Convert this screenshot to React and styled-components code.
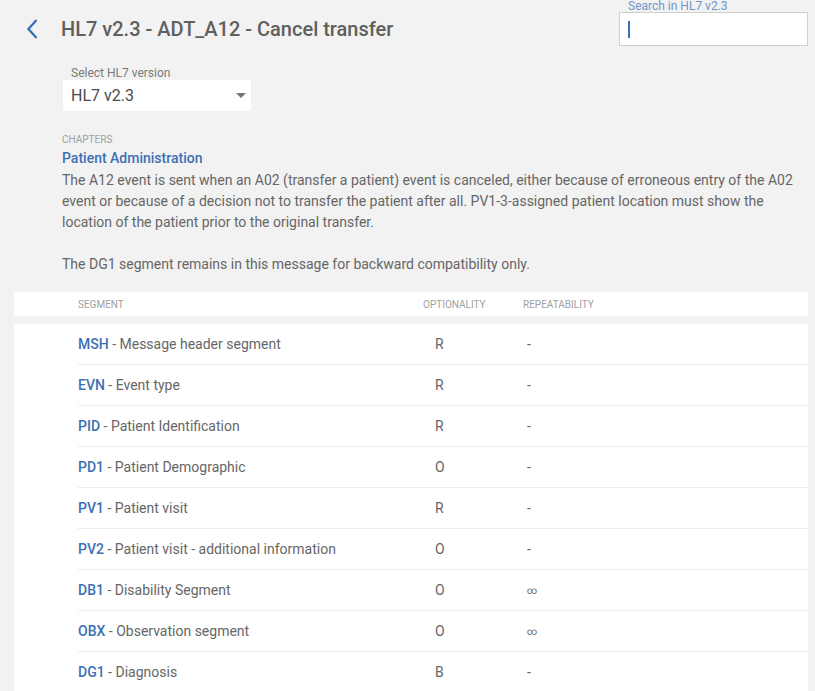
import React from "react";
import styled, { createGlobalStyle } from "styled-components";

const GlobalStyle = createGlobalStyle`
  body {
    margin: 0;
    background: #f2f2f2;
    font-family: Roboto, "Liberation Sans", sans-serif;
    color: #666;
  }
`;

const segments = [
  { code: "MSH", name: "Message header segment", opt: "R", rep: "-" },
  { code: "EVN", name: "Event type", opt: "R", rep: "-" },
  { code: "PID", name: "Patient Identification", opt: "R", rep: "-" },
  { code: "PD1", name: "Patient Demographic", opt: "O", rep: "-" },
  { code: "PV1", name: "Patient visit", opt: "R", rep: "-" },
  { code: "PV2", name: "Patient visit - additional information", opt: "O", rep: "-" },
  { code: "DB1", name: "Disability Segment", opt: "O", rep: "∞" },
  { code: "OBX", name: "Observation segment", opt: "O", rep: "∞" },
  { code: "DG1", name: "Diagnosis", opt: "B", rep: "-" },
];

// whole page
const Page = styled.div`
  padding: 0 7px 0 14px;
`;

// title line + search
const TopBar = styled.div`
  display: flex;
  justify-content: space-between;
  align-items: flex-start;
`;

const TitleWrap = styled.div`
  display: flex;
  align-items: center;
  height: 30px;
  margin-top: 14px;
`;

const BackButton = styled.button`
  display: flex;
  align-items: center;
  justify-content: center;
  width: 22px;
  height: 30px;
  margin: 0 18px 0 7px;
  padding: 0;
  border: none;
  background: none;
  cursor: pointer;
`;

const Title = styled.h1`
  margin: 0;
  font-size: 20px;
  font-weight: 500;
  color: #5f5f5f;
  line-height: 30px;
`;

const SearchWrap = styled.div`
  width: 189px;
  display: flex;
  flex-direction: column;
`;

const SearchLabel = styled.label`
  font-size: 12px;
  line-height: 12px;
  color: #7096cc;
  padding-left: 9px;
`;

const SearchBox = styled.div`
  height: 32px;
  display: flex;
  align-items: center;
  padding-left: 8px;
  background: #fff;
  border: 1px solid #cfcfcf;
`;

const Caret = styled.span`
  width: 2px;
  height: 17px;
  background: #3d6fb3;
`;

const SearchInput = styled.input`
  flex: 1;
  min-width: 0;
  border: none;
  outline: none;
  background: transparent;
  font: inherit;
  font-size: 14px;
`;

// HL7 version select
const SelectField = styled.div`
  margin: 20px 0 0 49px;
  width: 188px;
`;

const SelectLabel = styled.div`
  font-size: 12px;
  line-height: 14px;
  color: #7a7a7a;
  padding-left: 8px;
`;

const SelectBox = styled.div`
  height: 31px;
  display: flex;
  align-items: center;
  justify-content: space-between;
  padding: 0 5px 0 8px;
  background: #fff;
  font-size: 16px;
  color: #4a4a4a;
`;

const Arrow = styled.span`
  width: 0;
  height: 0;
  border-left: 5px solid transparent;
  border-right: 5px solid transparent;
  border-top: 5px solid #757575;
`;

// description
const Chapter = styled.div`
  padding-left: 48px;
  margin-top: 23px;
`;

const SmallCaps = styled.div`
  font-size: 10px;
  line-height: 12px;
  text-transform: uppercase;
  color: #a0a0a0;
`;

const ChapterName = styled.div`
  font-size: 14px;
  font-weight: 500;
  line-height: 21px;
  margin-top: 2px;
  color: #3d70b2;
`;

const Text = styled.p`
  margin: 1px 0 0;
  font-size: 14px;
  line-height: 21px;
  color: #666;
  & + & {
    margin-top: 21px;
  }
`;

// table
const TableHead = styled.div`
  display: grid;
  grid-template-columns: 345px 100px 1fr;
  align-items: center;
  height: 24px;
  margin-top: 17px;
  padding-left: 64px;
  background: #fff;
  font-size: 10px;
  color: #a0a0a0;
  text-transform: uppercase;
`;

const TableBody = styled.div`
  margin-top: 8px;
  background: #fff;
`;

const Row = styled.div`
  display: grid;
  grid-template-columns: 345px 100px 1fr;
  align-items: center;
  height: 40px;
  margin-left: 64px;
  border-bottom: 1px solid #ececec;
  font-size: 14px;
  color: #666;
`;

const Code = styled.span`
  font-weight: 500;
  color: #3d70b2;
`;

const Cell = styled.span`
  padding-left: ${(p) => p.$indent || 0}px;
  font-size: ${(p) => p.$size || 14}px;
`;

export default function App() {
  return (
    <Page>
      <GlobalStyle />
      <TopBar>
        <TitleWrap>
          <BackButton aria-label="Back">
            <svg width="14" height="22" viewBox="0 0 14 22">
              <polyline
                points="11.5,2 3.5,11 11.5,20"
                fill="none"
                stroke="#3d70b2"
                strokeWidth="2.4"
              />
            </svg>
          </BackButton>
          <Title>HL7 v2.3 - ADT_A12 - Cancel transfer</Title>
        </TitleWrap>
        <SearchWrap>
          <SearchLabel>Search in HL7 v2.3</SearchLabel>
          <SearchBox>
            <Caret />
            <SearchInput />
          </SearchBox>
        </SearchWrap>
      </TopBar>

      <SelectField>
        <SelectLabel>Select HL7 version</SelectLabel>
        <SelectBox>
          HL7 v2.3
          <Arrow />
        </SelectBox>
      </SelectField>

      <Chapter>
        <SmallCaps>Chapters</SmallCaps>
        <ChapterName>Patient Administration</ChapterName>
        <Text>
          The A12 event is sent when an A02 (transfer a patient) event is canceled, either because of
          erroneous entry of the A02 event or because of a decision not to transfer the patient after
          all. PV1-3-assigned patient location must show the location of the patient prior to the
          original transfer.
        </Text>
        <Text>The DG1 segment remains in this message for backward compatibility only.</Text>
      </Chapter>

      <TableHead>
        <span>Segment</span>
        <span>Optionality</span>
        <span>Repeatability</span>
      </TableHead>
      <TableBody>
        {segments.map((s) => (
          <Row key={s.code}>
            <Cell>
              <Code>{s.code}</Code> - {s.name}
            </Cell>
            <Cell $indent={12}>{s.opt}</Cell>
            <Cell $indent={4} $size={s.rep === "∞" ? 10 : 14}>
              {s.rep}
            </Cell>
          </Row>
        ))}
      </TableBody>
    </Page>
  );
}
